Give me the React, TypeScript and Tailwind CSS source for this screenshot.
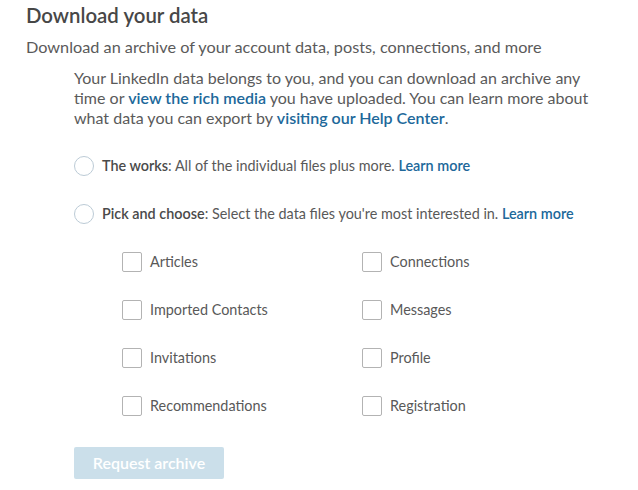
import React from 'react';

const left = ['Articles', 'Imported Contacts', 'Invitations', 'Recommendations'];
const right = ['Connections', 'Messages', 'Profile', 'Registration'];

const Checkbox = ({ label }: { label: string }) => (
  <label className="flex items-center h-[20px]">
    <span className="w-[20px] h-[20px] rounded-[2px] border border-[#b3b3b3] bg-white shrink-0" />
    <span className="ml-[8px] text-[14.4px] text-[#595959]">{label}</span>
  </label>
);

const Radio = ({ title, text }: { title: string; text: string }) => (
  <div className="flex items-center h-[20px]">
    <span className="w-[20px] h-[20px] rounded-full border border-[#bccbd6] bg-white shrink-0" />
    <p className="ml-[8px] text-[14.4px] text-[#595959]">
      <span className="font-semibold text-[#4a4a4a]">{title}</span>: {text}{' '}
      <span className="font-semibold text-[#20689a]">Learn more</span>
    </p>
  </div>
);

export default function App() {
  return (
    <div className="w-[638px] h-[490px] bg-white pl-[26px] pt-[1px]" style={{ fontFamily: 'Lato, "Noto Sans", sans-serif' }}>
      <h1 className="text-[20.4px] font-semibold text-[#474747] leading-[28px]">Download your data</h1>
      <p className="mt-[6px] text-[16.25px] text-[#5a5a5a] leading-[24px]">
        Download an archive of your account data, posts, connections, and more
      </p>
      <div className="pl-[48px] mt-[9px]">
        <p className="text-[16px] text-[#5a5a5a] leading-[20px] w-[530px]">
          Your LinkedIn data belongs to you, and you can download an archive any time or{' '}
          <span className="font-semibold text-[#20689a]">view the rich media</span> you have uploaded. You can learn more
          about what data you can export by{' '}
          <span className="font-semibold text-[#20689a]">visiting our Help Center</span>.
        </p>
        <div className="mt-[28px] flex flex-col gap-[28px]">
          <Radio title="The works" text="All of the individual files plus more." />
          <Radio title="Pick and choose" text="Select the data files you're most interested in." />
        </div>
        <div className="mt-[28px] ml-[48px] grid grid-cols-[240px_1fr] gap-y-[28px]">
          {left.map((l, i) => (
            <React.Fragment key={l}>
              <Checkbox label={l} />
              <Checkbox label={right[i]} />
            </React.Fragment>
          ))}
        </div>
        <div className="mt-[31px]">
          <button className="w-[150px] h-[32px] rounded-[2px] bg-[#cbdfea] text-white text-[16px] font-semibold">
            Request archive
          </button>
        </div>
      </div>
    </div>
  );
}
